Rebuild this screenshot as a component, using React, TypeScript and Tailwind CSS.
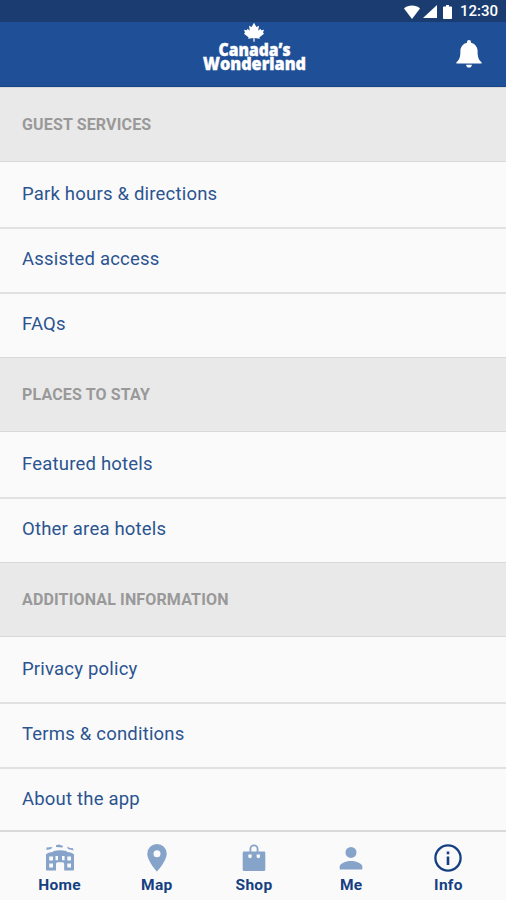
const sections = [
  {
    title: "GUEST SERVICES",
    items: ["Park hours & directions", "Assisted access", "FAQs"],
  },
  {
    title: "PLACES TO STAY",
    items: ["Featured hotels", "Other area hotels"],
  },
  {
    title: "ADDITIONAL INFORMATION",
    items: ["Privacy policy", "Terms & conditions", "About the app"],
  },
];

function StatusBar() {
  return (
    <div className="flex h-[22px] shrink-0 items-center justify-end bg-[#1b3c70] pt-px pr-2 text-white">
      <svg className="mr-[3px] h-[14px] w-[16px]" viewBox="0 0 16 14" fill="currentColor">
        <path d="M8 14 0 3.400C2.200 1.400 5 .5 8 .5s5.800.900 8 2.900z" />
      </svg>
      <svg className="mr-[6px] h-[13px] w-[14px]" viewBox="0 0 14 13" fill="currentColor">
        <path d="M14 0v13H0z" />
      </svg>
      <svg className="mr-[8px] h-[14px] w-[9px]" viewBox="0 0 9 14" fill="currentColor">
        <path d="M3 0h3v1.500h2.200q.8 0 .8.800v10.900q0 .8-.8.800H.8q-.8 0-.8-.8V2.300q0-.8.800-.8H3z" />
      </svg>
      <span className="text-[15px] leading-none font-medium">12:30</span>
    </div>
  );
}

function Logo() {
  return (
    <svg className="h-[60px] w-[108px]" viewBox="0 0 108 60" fill="#fff">
      <path
        transform="translate(43 .8)"
        d="M10 0 12.400 4.200 15 3 14.200 8 16.400 6 17.200 7.400 20 7 19 9.800 20 11 15.500 14.500 15.800 16 10.600 15.300V19H9.400V15.300L4.200 16 4.500 14.500 0 11 1 9.800 0 7 2.800 7.400 3.600 6 5.800 8 5 3 7.600 4.200z"
      />
      <g className="font-['Open_Sans']" fontWeight="800" fontSize="17.500" stroke="#fff" strokeWidth=".4">
        <text x="17.500" y="34.300" textLength="72" lengthAdjust="spacingAndGlyphs">
          Canada’s
        </text>
        <text x="2" y="48.300" textLength="103" lengthAdjust="spacingAndGlyphs">
          Wonderland
        </text>
      </g>
    </svg>
  );
}

function TopBar() {
  return (
    <header className="grid h-[65px] shrink-0 grid-cols-[1fr_108px_1fr] border-b border-[#174588] bg-[#1f5097] pl-[3px]">
      <div />
      <Logo />
      <button className="mt-[18px] mr-[23px] self-start justify-self-end text-white" aria-label="Notifications">
        <svg className="h-[28px] w-[28px]" viewBox="0 0 28 28" fill="currentColor">
          <path d="M14 0a2 2 0 0 1 2 2v.8c4 .900 6.600 4.300 6.600 8.300 0 5.500.7 8.900 4 11.100v1.300H1.400v-1.300c3.300-2.200 4-5.600 4-11.100 0-4 2.600-7.400 6.600-8.300V2a2 2 0 0 1 2-2zM11.200 24.800h5.600a2.800 2.800 0 0 1-5.600 0z" />
        </svg>
      </button>
    </header>
  );
}

function HomeIcon() {
  return (
    <svg className="h-7 w-7" viewBox="0 0 28 28" fill="currentColor">
      <path d="M.5 3.500 6.500 3 5 5 .5 6zM10 1.200l3-.8 4 1.500L16.500 3.400 10 3zM21 2.500 24 4l3 .2.500 2.200L22 5z" />
      <path
        fillRule="evenodd"
        d="M0 10.500Q2 8.300 7 8l.5-1Q14 5.500 20.500 7l.5 1Q26 8.300 28 10.500V25.500q0 1-1 1H18.200V20q0-1.800-1.500-1.800h-5.200Q10 18.200 10 20v6.500H1q-1 0-1-1zM3.200 12.500v4H7v-4zM9.500 12v4.300H12V12zM16 12v4.300h2.600V12zM21.300 12.500v4H25v-4zM3.200 19.500v4H7v-4zM21.300 19.500v4H25v-4z"
      />
    </svg>
  );
}

function MapIcon() {
  return (
    <svg className="h-7 w-7" viewBox="0 0 28 28" fill="currentColor">
      <path
        fillRule="evenodd"
        d="M14 0a9.700 9.700 0 0 0-9.700 9.700C4.300 17 14 27.500 14 27.500S23.700 17 23.700 9.700A9.700 9.700 0 0 0 14 0zm0 6.200a3.500 3.500 0 1 1 0 7 3.500 3.500 0 0 1 0-7z"
      />
    </svg>
  );
}

function ShopIcon() {
  return (
    <svg className="h-7 w-7" viewBox="0 0 28 28" fill="currentColor">
      <path
        fillRule="evenodd"
        d="M9.500 7.500V5a4.500 4.500 0 0 1 9 0v2.500H24q1.300 0 1.300 1.300V25.500q0 1.500-1.500 1.500H4.200q-1.500 0-1.500-1.500V8.800q0-1.300 1.300-1.300zm1.800 0h5.400V5a2.700 2.700 0 0 0-5.400 0zM8.300 10.500v2a1.700 1.700 0 0 0 3.400 0v-2zM16.600 10.500v2a1.700 1.700 0 0 0 3.400 0v-2z"
      />
    </svg>
  );
}

function MeIcon() {
  return (
    <svg className="h-7 w-7" viewBox="0 0 28 28" fill="currentColor">
      <circle cx="14" cy="8.400" r="5.500" />
      <path d="M2.700 25.500v-3c0-3.700 7.500-5.600 11.300-5.600s11.300 1.900 11.300 5.600v3z" />
    </svg>
  );
}

function InfoIcon() {
  return (
    <svg className="h-7 w-7" viewBox="0 0 28 28" fill="currentColor">
      <circle cx="14" cy="14" r="12.600" fill="none" stroke="currentColor" strokeWidth="2.300" />
      <path d="M12.700 7.500h2.600v2.800h-2.600zM12.700 12.500h2.600v8.500h-2.600z" />
    </svg>
  );
}

const tabs = [
  { label: "Home", Icon: HomeIcon },
  { label: "Map", Icon: MapIcon },
  { label: "Shop", Icon: ShopIcon },
  { label: "Me", Icon: MeIcon },
  { label: "Info", Icon: InfoIcon, active: true },
];

export default function App() {
  return (
    <div className="flex h-[900px] w-[506px] flex-col overflow-hidden bg-[#fafafa] font-[Roboto,sans-serif]">
      <StatusBar />
      <TopBar />
      <main className="min-h-0 flex-1 overflow-hidden">
        {sections.map((section) => (
          <section key={section.title}>
            <h2 className="flex h-[75px] items-center border-y border-[#d9d9d9] bg-[#e9e9e9] pt-px pl-[22px] text-[16px] font-bold tracking-[0.15px] text-[#999999]">
              {section.title}
            </h2>
            <ul>
              {section.items.map((item) => (
                <li
                  key={item}
                  className="flex h-[65px] items-center border-[#e1e1e1] pl-[22px] text-[18.5px] tracking-[0.2px] text-[#2b5490] not-first:border-t-2 not-first:pb-[2px]"
                >
                  {item}
                </li>
              ))}
            </ul>
          </section>
        ))}
      </main>
      <nav className="flex h-[70px] shrink-0 border-t-2 border-[#d9d9d9] pr-[9px] pl-[11px]">
        {tabs.map(({ label, Icon, active }) => (
          <a key={label} className="flex flex-1 flex-col items-center pt-3 text-[#153f82]">
            <span className={active ? "text-[#153f82]" : "text-[#86a3ca]"}>
              <Icon />
            </span>
            <span className="mt-[3px] text-[15.5px] leading-[20px] font-bold tracking-[0.3px]">{label}</span>
          </a>
        ))}
      </nav>
    </div>
  );
}
